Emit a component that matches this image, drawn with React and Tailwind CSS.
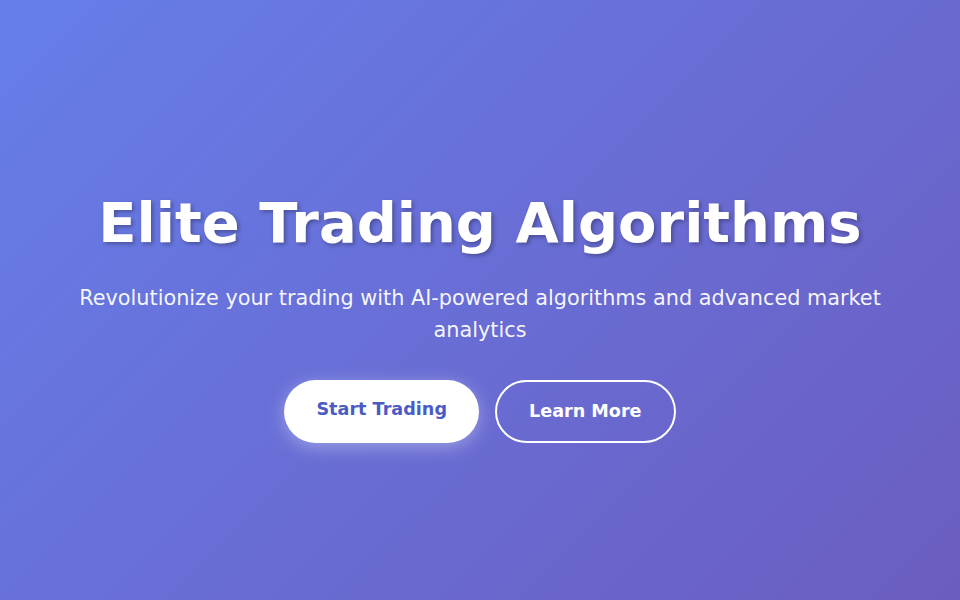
import React from "react";

function App() {
  return (
    <div
      className="min-h-[600px] w-full flex items-center justify-center bg-[linear-gradient(135deg,#667eea_0%,#6b5dc0_100%)] text-white pt-[32px]"
      style={{ fontFamily: '"DejaVu Sans", sans-serif' }}
    >
      {/* Hero */}
      <section className="flex flex-col items-center text-center px-8">
        <h1 className="text-[56px] leading-[67px] font-bold mb-[26px] [text-shadow:2px_2px_4px_rgba(0,0,0,0.3)]">
          Elite Trading Algorithms
        </h1>
        <p className="text-[20.8px] leading-[32px] max-w-[812px] mb-[34px] text-white/95">
          Revolutionize your trading with AI-powered algorithms and advanced market analytics
        </p>
        <div className="flex items-center gap-4">
          <button className="px-8 pt-4 pb-5 rounded-full bg-white text-[#4b5bc5] text-[17.6px] leading-[27px] font-bold shadow-[0_4px_18px_rgba(255,255,255,0.35)]">
            Start Trading
          </button>
          <button className="px-8 py-4 rounded-full bg-transparent border-2 border-white text-white text-[17.6px] leading-[27px] font-bold">
            Learn More
          </button>
        </div>
      </section>
    </div>
  );
}

export default App;
